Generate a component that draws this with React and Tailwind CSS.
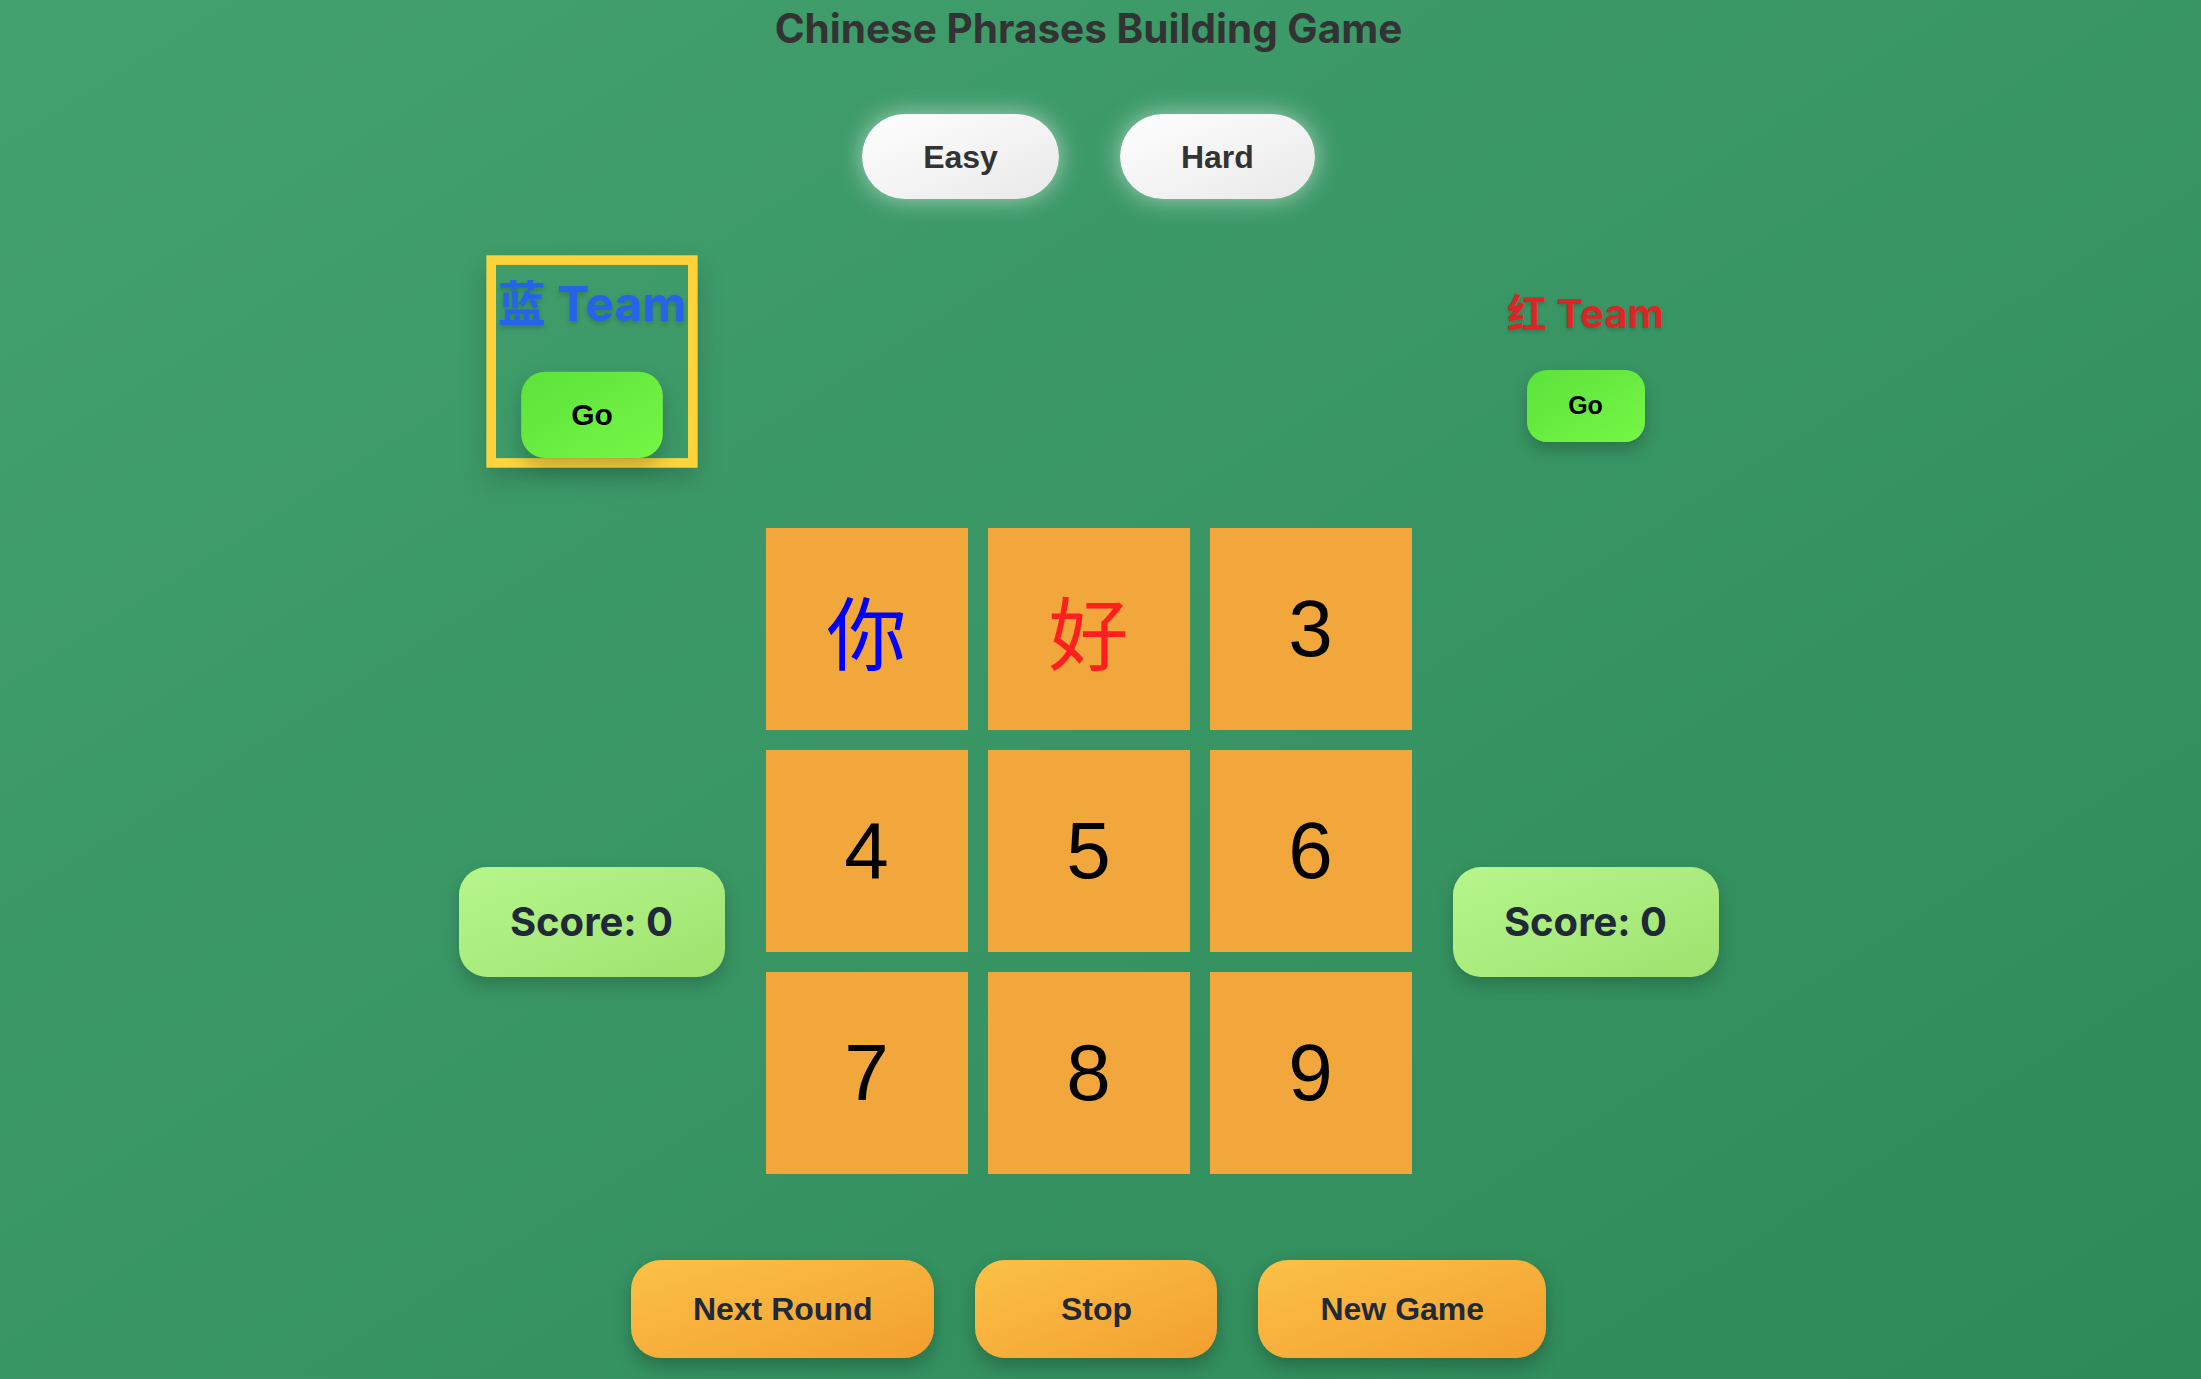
export default function App() {
  const inter = "font-['Inter','Noto_Sans_CJK_SC',sans-serif]";
  const arial = "font-['Liberation_Sans','Arial',sans-serif]";
  const tiles = [
    { t: "你", c: "text-[#0000ff]", cjk: true },
    { t: "好", c: "text-[#ff1f1f]", cjk: true },
    { t: "3" }, { t: "4" }, { t: "5" }, { t: "6" }, { t: "7" }, { t: "8" }, { t: "9" },
  ];
  const goBtn =
    "h-[72px] w-[118px] rounded-[20px] bg-gradient-to-br from-[#5ce23b] to-[#76f746] text-[25px] font-bold text-black shadow-[0_8px_16px_rgba(0,0,0,0.22)] font-['Liberation_Sans','Arial',sans-serif]";
  const scoreBox =
    "flex h-[110px] w-[266px] items-center justify-center rounded-[28px] bg-gradient-to-br from-[#b6f68c] to-[#9fe26f] text-[40px] font-bold text-[#1f2937] shadow-[0_8px_18px_rgba(0,0,0,0.2)] font-['Inter',sans-serif]";
  const bottomBtn =
    "h-[98px] rounded-[30px] bg-gradient-to-br from-[#fbc146] to-[#f29f30] text-[32px] font-bold text-[#1f2937] shadow-[0_8px_18px_rgba(0,0,0,0.25)] font-['Liberation_Sans','Arial',sans-serif]";
  const diffBtn =
    "h-[85px] rounded-full bg-gradient-to-br from-[#ffffff] to-[#e9e9e9] px-[61px] text-[32px] font-bold text-[#333333] shadow-[0_0_24px_rgba(255,255,255,0.55)] font-['Liberation_Sans','Arial',sans-serif]";
  const teamName = "pt-[3px] leading-[60px] text-[40px] font-bold whitespace-nowrap [text-shadow:0_2px_4px_rgba(0,0,0,0.18)] font-['Inter','Noto_Sans_CJK_SC',sans-serif]";

  return (
    <div className="min-h-screen w-full bg-gradient-to-br from-[#43a16f] to-[#2e8a59] pr-[24px]">
      <div className="flex flex-col items-center">
        <h1 className={`mt-[6px] text-[40.5px] leading-[46px] font-bold text-[#333333] ${inter}`}>
          Chinese Phrases Building Game
        </h1>

        <div className="mt-[62px] flex gap-[61px]">
          <button className={diffBtn}>Easy</button>
          <button className={diffBtn}>Hard</button>
        </div>

        <div className="mt-[74px] flex items-start gap-[41px]">
          <div className="flex w-[266px] flex-col items-center">
            <div className="flex h-[177px] w-[176px] scale-[1.2] flex-col items-center border-[8px] border-[#fdd43c] shadow-[0_10px_20px_rgba(0,0,0,0.18)]">
              <div className={`${teamName} text-[#2563eb]`}>蓝 Team</div>
              <button className={`mt-[26px] ${goBtn}`}>Go</button>
            </div>
            <div className={`mt-[417px] ${scoreBox}`}>Score: 0</div>
          </div>

          <div className="mt-[255px] grid grid-cols-3 gap-[20px]">
            {tiles.map((tile, i) => (
              <div
                key={i}
                className={`flex h-[202px] w-[202px] items-center justify-center bg-[#f1a73c] text-[80px] ${
                  tile.cjk ? "font-['Noto_Sans_CJK_SC',sans-serif]" : arial
                } ${tile.c || "text-black"}`}
              >
                {tile.t}
              </div>
            ))}
          </div>

          <div className="flex w-[266px] flex-col items-center">
            <div className="flex h-[177px] w-[176px] flex-col items-center border-[8px] border-transparent">
              <div className={`${teamName} text-[#dc2626]`}>红 Team</div>
              <button className={`mt-[26px] ${goBtn}`}>Go</button>
            </div>
            <div className={`mt-[417px] ${scoreBox}`}>Score: 0</div>
          </div>
        </div>

        <div className="mt-[86px] flex gap-[41px]">
          <button className={`${bottomBtn} px-[62px]`}>Next Round</button>
          <button className={`${bottomBtn} w-[242px]`}>Stop</button>
          <button className={`${bottomBtn} px-[62px]`}>New Game</button>
        </div>
      </div>
    </div>
  );
}
